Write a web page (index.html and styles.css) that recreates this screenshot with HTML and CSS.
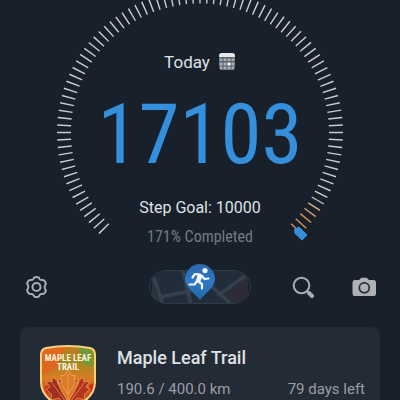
FILE: index.html
```html
<!DOCTYPE html>
<html lang="en">
<head>
<meta charset="utf-8">
<meta name="viewport" content="width=device-width, initial-scale=1">
<title>Steps</title>
<link rel="stylesheet" href="styles.css">
</head>
<body>
<main class="screen">
  <section class="dial">
    <svg class="ring" viewBox="50 0 300 250" aria-hidden="true">
      <defs>
        <linearGradient id="warm" gradientUnits="userSpaceOnUse" x1="323" y1="193" x2="307" y2="218">
          <stop offset="0" stop-color="#d3d5d8"/>
          <stop offset="1" stop-color="#d8914a"/>
        </linearGradient>
      </defs>
      <!-- One tick every 3 degrees; pathLength makes one dash unit one degree -->
      <path class="ticks" pathLength="251.300" d="M104.340 229.170A136 136 0 1 1 322.200 192.100"/>
      <path class="warm-ticks" d="M311.700 197l12.100 7M308.200 202.800l11.800 7.600M304.400 208.300l11.300 8.300M300.200 213.600l10.900 8.900M295.800 218.800l10.500 9.400M291.200 223.700l6 6"/>
      <path class="warm-ticks" d="M314.900 191.100l12.500 6.300"/>
      <path class="marker" d="M294.500 229.500L299 227L307 235L302 240L295 233.500Z"/>
    </svg>
    <div class="readout">
      <button class="day" type="button">Today
        <svg width="18" height="18" viewBox="0 0 18 18" aria-hidden="true">
          <rect x="1" y="0" width="16" height="17" rx="3" fill="#59616b"/>
          <path d="M1 4V3a3 3 0 0 1 3-3h10a3 3 0 0 1 3 3v1z" fill="#e8e8ea"/>
          <path d="M1.500 5.500h3v2.500h-3zM5.500 5.500h3v2.500h-3zM9.500 5.500h3v2.500h-3zM13.500 5.500h3v2.500h-3zM1.500 9.500h3v3h-3zM5.500 9.500h3v3h-3zM13.500 9.500h3v3h-3zM2 13.500h2.500v3H2zM5.500 13.500h3v3h-3zM9.500 13.500h3v3h-3zM13.500 13.500H16v3h-2.500z" fill="#a9adb3"/>
          <path d="M9.500 9.500h3v3h-3z" fill="#fff"/>
        </svg>
      </button>
      <h1 class="steps">17103</h1>
      <p class="goal">Step Goal: 10000</p>
      <p class="done">171% Completed</p>
    </div>
  </section>

  <nav class="tools">
    <div class="side">
      <button class="tool" type="button" aria-label="Settings">
        <svg width="24" height="24" viewBox="0 0 24 24" fill="none" stroke="#a9adb3" stroke-width="2">
          <path stroke-linejoin="round" d="M9.700 3.600Q10.100 2 12.500 2T15.300 3.600Q16.100 5.200 17.900 5Q20 4.600 21.200 6.700T21.200 9.900Q20.100 12 21.200 14.100Q22.400 15.300 21.200 17.300T17.900 19Q16.100 18.800 15.300 20.400Q14.900 22 12.500 22T9.700 20.400Q8.900 18.800 7.100 19Q5 19.400 3.800 17.300T3.800 14.100Q4.900 12 3.800 9.900Q2.600 8.700 3.800 6.700T7.100 5Q8.900 5.200 9.700 3.600Z"/>
          <circle cx="12.500" cy="12" r="4"/>
        </svg>
      </button>
    </div>
    <button class="map" type="button" aria-label="Activity map">
      <svg class="streets" viewBox="0 0 102 34" aria-hidden="true">
        <rect width="102" height="34" fill="#222d3b"/>
        <path d="M0 12L8 34H0z" fill="#243b3a"/>
        <path d="M76 22L102 4v30H86z" fill="#2c2b38"/>
        <path d="M2 7l9 27M8 28l34-7M33 0l8 34M57 11l26 23M70 26L102 3" stroke="#36404c" stroke-width="4" fill="none"/>
      </svg>
      <svg class="pin" width="32" height="38" viewBox="0 0 32 38" aria-hidden="true">
        <defs>
          <linearGradient id="pinfill" x1="0" y1="0" x2="0" y2="1">
            <stop offset="0" stop-color="#2d66a8"/>
            <stop offset=".5" stop-color="#2c78c6"/>
            <stop offset="1" stop-color="#2568aa"/>
          </linearGradient>
        </defs>
        <path d="M16 37C13 32 1 25 1 16a15 15 0 0 1 30 0c0 9-12 16-15 21z" fill="url(#pinfill)"/>
        <circle cx="21" cy="7.500" r="2.600" fill="#f4f8fc"/>
        <path d="M8.500 14.500l2.500-3.500 5 .5M18 13l2.500 3 4-.5M14 18.500l4 2.500v4.500M13 18l-2.500 3.500H5.500" fill="none" stroke="#f4f8fc" stroke-width="2.200" stroke-linecap="round" stroke-linejoin="round"/>
        <path d="M14 10.500l5 1.500-3 7.500-4-2z" fill="#f4f8fc"/>
      </svg>
    </button>
    <div class="side side-end">
      <button class="tool" type="button" aria-label="Search">
        <svg width="24" height="24" viewBox="0 0 24 24" fill="none" stroke="#a9adb3">
          <circle cx="10.500" cy="10.500" r="7.800" stroke-width="2"/>
          <path d="M16 16l2 2" stroke-width="2"/>
          <path d="M18 18l3 3" stroke-width="4" stroke-linecap="round"/>
        </svg>
      </button>
      <button class="tool" type="button" aria-label="Camera">
        <svg width="24" height="24" viewBox="0 0 24 24">
          <path d="M3 5h4l1.500-1.500q.5-.7 1.300-.7h4.400q.8 0 1.300.7L17 5h4.500Q24 5 24 7.500v11q0 2.500-2.500 2.500H3Q.500 21 .500 18.500v-11Q.500 5 3 5z" fill="#adb0b4"/>
          <circle cx="12.300" cy="12.800" r="5" fill="none" stroke="#27303a" stroke-width="1.800"/>
        </svg>
      </button>
    </div>
  </nav>

  <article class="card">
    <svg class="badge" width="56" height="66" viewBox="0 0 56 66" role="img" aria-label="Maple Leaf Trail badge">
      <defs>
        <linearGradient id="autumn" x1="0" y1="0" x2="0" y2="1">
          <stop offset="0" stop-color="#c9791e"/>
          <stop offset=".25" stop-color="#9c8a28"/>
          <stop offset=".5" stop-color="#d97c22"/>
          <stop offset="1" stop-color="#b53018"/>
        </linearGradient>
      </defs>
      <path d="M6 4Q28 0 50 4q5 1 5 7v27q0 18-27 27Q1 56 1 38V11q0-6 5-7z" fill="url(#autumn)"/>
      <path d="M2 10q0-5 5-6 10-2 18-2L17 24 2 32z" fill="#df671e"/>
      <path d="M38 3l11 2q4 1 4 6v11l-9-2z" fill="#6f9a36"/>
      <path d="M4 43l5-2 2 5-4 4zM49 41l5-2v8l-4 1z" fill="#d22d1b"/>
      <g stroke="#f3b45f" stroke-width=".6" stroke-linejoin="round">
        <path d="M25 62l-6-8-8 2 1-5-6-6 4-2-4-6 6 1 1-5 6 6-1-5 8 8 1 20z" fill="#a02e20"/>
        <path d="M31 62l6-8 8 2-1-5 6-6-4-2 4-6-6 1-1-5-6 6 1-5-8 8-1 20z" fill="#b4351f"/>
        <path d="M28 26l4 6 3-1-1 8 5-1-5 10-6 10-6-10-5-10 5 1-1-8 3 1z" fill="#dc7a2c"/>
        <path d="M28 30v34M28 50l-6-9M28 50l6-9M26 58L12 39M30 58l14-19" fill="none"/>
      </g>
      <path d="M6 4Q28 0 50 4q5 1 5 7v27q0 18-27 27Q1 56 1 38V11q0-6 5-7z" fill="none" stroke="#f6d27c" stroke-width="2"/>
      <text x="28" y="17" class="badge-text">MAPLE LEAF</text>
      <text x="28" y="26" class="badge-text">TRAIL</text>
    </svg>
    <div class="info">
      <h2 class="title">Maple Leaf Trail</h2>
      <div class="stats"><span>190.6 / 400.0 km</span><span>79 days left</span></div>
    </div>
  </article>
</main>
</body>
</html>
```
FILE: styles.css
```css
* { box-sizing: border-box; }

body {
  margin: 0;
  background: #17202b;
  color: #dfe1e4;
  font-family: Roboto, "Liberation Sans", sans-serif;
}

button {
  padding: 0;
  border: 0;
  background: none;
  color: inherit;
  font: inherit;
}

h1, h2, p { margin: 0; font-weight: 400; }
svg { display: block; }

.screen { height: 100vh; overflow: hidden; }

.dial { display: grid; justify-items: center; }
.dial > * { grid-area: 1 / 1; }
.ring { width: 300px; }
.ticks {
  fill: none;
  stroke: #c9ccd0;
  stroke-width: 14;
  stroke-dasharray: 0.6 2.4;
}
.warm-ticks { fill: none; stroke: url(#warm); stroke-width: 1.4; }
.marker { fill: #348fdc; stroke: #348fdc; stroke-width: 1; stroke-linejoin: round; }

.readout {
  display: flex;
  flex-direction: column;
  align-items: center;
  padding-top: 50px;
}
.day {
  display: flex;
  align-items: center;
  gap: 8px;
  font-size: 17px;
  line-height: 24px;
}
.steps {
  margin-top: 13px;
  color: #348fdc;
  font-family: "Roboto Condensed", "Liberation Sans Narrow", Roboto, sans-serif;
  font-size: 83px;
  line-height: 96px;
}
.goal { margin-top: 13px; font-size: 16px; line-height: 24px; }
.done {
  margin-top: 5px;
  color: #747a82;
  font-family: "Roboto Condensed", "Liberation Sans Narrow", Roboto, sans-serif;
  font-size: 16px;
  line-height: 24px;
}

.tools {
  display: flex;
  align-items: center;
  padding: 20px 24px 0;
}
.side { display: flex; flex: 1; gap: 37px; }
.side-end { justify-content: flex-end; }
.map {
  position: relative;
  width: 102px;
  height: 34px;
  border: 1px solid #303b48;
  border-radius: 17px;
}
.streets { width: 100%; height: 100%; border-radius: 16px; }
.pin { position: absolute; left: 34px; bottom: 2px; }

.card {
  display: flex;
  gap: 21px;
  margin: 23px 20px 0;
  padding: 17px 15px 16px 20px;
  border-radius: 9px;
  background: #232b37;
}
.badge { flex: none; }
.badge-text {
  fill: #fff3df;
  font-family: "Roboto Condensed", "Liberation Sans Narrow", Roboto, sans-serif;
  font-size: 9px;
  font-weight: 700;
  text-anchor: middle;
}
.info { flex: 1; }
.title { font-size: 18px; font-weight: 500; line-height: 28px; }
.stats {
  display: flex;
  justify-content: space-between;
  margin-top: 5px;
  color: #9a9ea5;
  font-size: 15px;
  line-height: 24px;
}
```
